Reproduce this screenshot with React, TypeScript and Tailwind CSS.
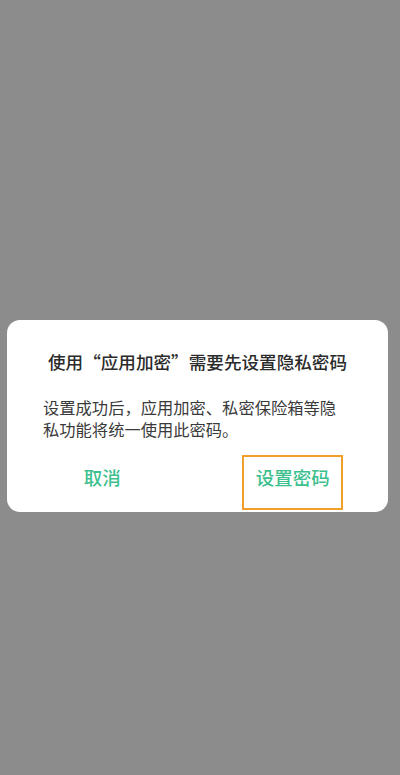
export default function App() {
  return (
    <div
      className="flex h-[775px] w-[400px] flex-col bg-[#8c8c8c] px-[7px] pt-[320px]"
      style={{ fontFamily: '"Noto Sans CJK SC", "Noto Sans", sans-serif' }}
    >
      <div className="flex h-[192px] w-[381px] flex-col rounded-[13px] bg-white pt-[30px] pb-[2px]">
        <div className="text-center text-[17.6px] font-medium leading-[24px] text-[#2b2b2b]">
          使用“应用加密”需要先设置隐私密码
        </div>
        <p className="mt-[22px] w-[302px] pl-[36px] box-content text-[16.3px] leading-[22px] text-[#3a3a3a]">
          设置成功后，应用加密、私密保险箱等隐私功能将统一使用此密码。
        </p>
        <div className="mt-[15px] grid grid-cols-2">
          <div className="flex h-[55px] items-center justify-center pb-[9px] text-[18.5px] font-medium text-[#3dbf8e]">
            取消
          </div>
          <div className="flex justify-center">
            <button className="flex h-[55px] w-[101px] items-center justify-center border-2 border-[#f0a02a] pb-[9px] text-[18.5px] font-medium text-[#3dbf8e]">
              设置密码
            </button>
          </div>
        </div>
      </div>
    </div>
  );
}
